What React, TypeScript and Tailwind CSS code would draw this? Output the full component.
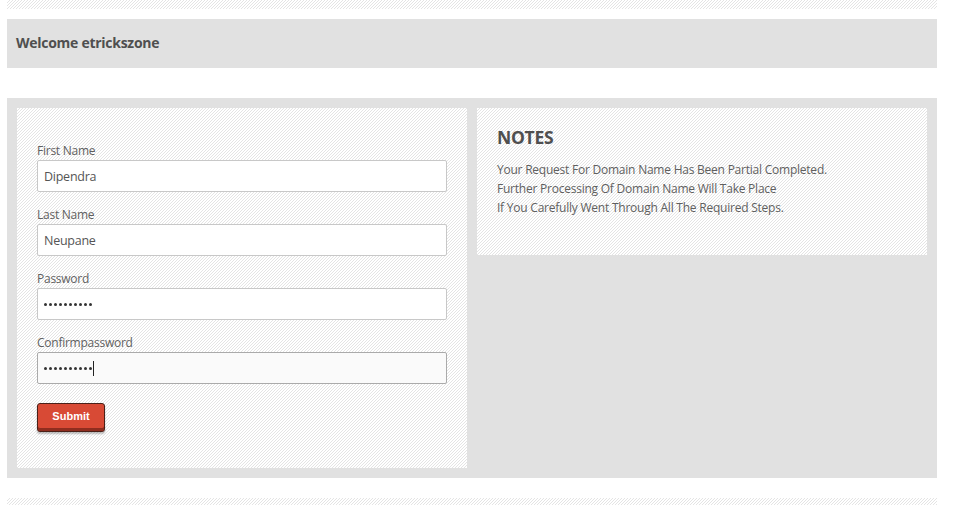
const hatch = "bg-white bg-[linear-gradient(135deg,#e4e4e4_12.5%,#ffffff_12.5%,#ffffff_50%,#e4e4e4_50%,#e4e4e4_62.5%,#ffffff_62.5%)] bg-[length:3px_3px]";

function Field({ label, value, type = "text", focused = false }: { label: string; value: string; type?: string; focused?: boolean }) {
  return (
    <div className="flex flex-col">
      <div className="h-[18px] text-[12px] leading-[18px] tracking-[-0.25px] text-[#5f5f5f]">{label}</div>
      <div
        className={`h-[32px] w-[410px] rounded-[2px] border border-solid pl-[6px] flex items-center text-[#555] ${
          focused ? "border-[#aaaaaa] bg-[#fafafa]" : "border-[#c8c8c8] bg-white"
        }`}
      >
        {type === "password" ? (
          <span className="flex items-center gap-[2px]">
            {Array.from({ length: 10 }).map((_, i) => (
              <span key={i} className="block h-[3px] w-[3px] rounded-full bg-[#333]" />
            ))}
          </span>
        ) : (
          <span className="pt-[2px] text-[12.5px] tracking-[-0.25px]">{value}</span>
        )}
        {focused && <span className="ml-[1px] block h-[15px] w-[1px] bg-[#222]" />}
      </div>
    </div>
  );
}

export default function App() {
  return (
    <div className="h-[505px] w-[954px] overflow-hidden bg-white pl-[7px] font-['Open_Sans',sans-serif]">
      <div className="flex w-[930px] flex-col">
        <div className={`h-[9px] ${hatch}`} />
        <div className="mt-[10px] flex h-[49px] items-center bg-[#e1e1e1] pb-[2px] pl-[9px] text-[14px] font-bold tracking-[-0.27px] text-[#4f4f4f]">
          Welcome etrickszone
        </div>
        <div className="mt-[30px] flex h-[380px] items-start gap-[10px] bg-[#e1e1e1] p-[10px]">
          <div className={`flex h-[360px] w-[450px] flex-col px-[20px] pt-[34px] ${hatch}`}>
            <div className="flex flex-col gap-[14px]">
              <Field label="First Name" value="Dipendra" />
              <Field label="Last Name" value="Neupane" />
              <Field label="Password" value="••••••••••" type="password" />
              <Field label="Confirmpassword" value="••••••••••" type="password" focused />
            </div>
            <button className="mt-[19px] h-[29px] w-[68px] rounded-[3px] border border-solid border-[#4a2018] bg-[#d84a35] pb-[2px] font-['Liberation_Sans',sans-serif] text-[11px] font-bold text-white shadow-[inset_0_-3px_0_#8f2d1f,0_2px_2px_rgba(0,0,0,0.25)]">
              Submit
            </button>
          </div>
          <div className={`h-[147px] w-[450px] px-[20px] pt-[17px] ${hatch}`}>
            <div className="text-[17.5px] font-bold leading-[24px] tracking-[-0.3px] text-[#4f4f4f]">NOTES</div>
            <div className="mt-[11px] text-[12px] leading-[19px] tracking-[-0.23px] text-[#5f5f5f]">
              <div>Your Request For Domain Name Has Been Partial Completed.</div>
              <div>Further Processing Of Domain Name Will Take Place</div>
              <div>If You Carefully Went Through All The Required Steps.</div>
            </div>
          </div>
        </div>
        <div className={`mt-[20px] h-[7px] ${hatch}`} />
      </div>
    </div>
  );
}
